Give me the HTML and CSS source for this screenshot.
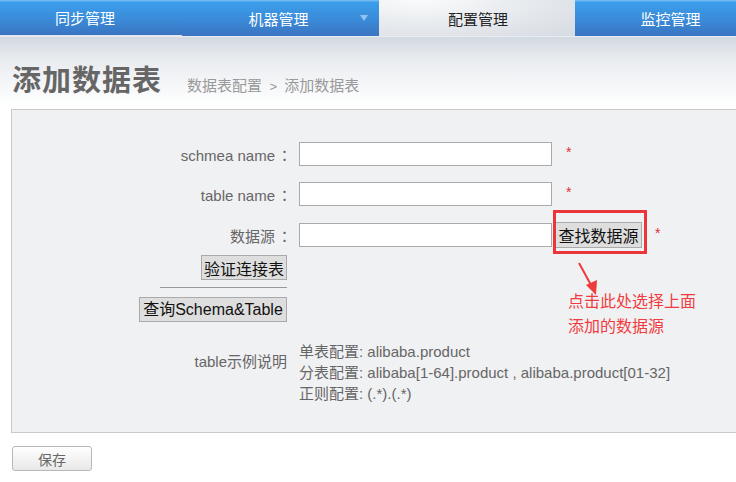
FILE: index.html
```html
<!DOCTYPE html>
<html lang="zh">
<head>
<meta charset="utf-8">
<link rel="stylesheet" href="styles.css">
</head>
<body>
<nav class="nav">
  <div class="tab tab-first">同步管理</div>
  <div class="tab tab-drop">机器管理<span class="caret"></span></div>
  <div class="tab tab-active">配置管理</div>
  <div class="tab tab-last">监控管理</div>
</nav>
<header class="head">
  <h1 class="title">添加数据表</h1>
  <div class="crumb">数据表配置 <span class="gt">&gt;</span> 添加数据表</div>
</header>
<section class="panel">
  <div class="form">
    <label class="lbl">schmea name<span class="colon">：</span></label>
    <div class="field"><input class="inp" type="text"><span class="req">*</span></div>

    <label class="lbl">table name<span class="colon">：</span></label>
    <div class="field"><input class="inp" type="text"><span class="req">*</span></div>

    <label class="lbl">数据源<span class="colon">：</span></label>
    <div class="field field-src"><input class="inp" type="text"><button class="btn btn-find">查找数据源</button><span class="req req2">*</span></div>

    <div class="lbl-col">
      <button class="btn btn-verify">验证连接表</button>
      <hr class="sep">
      <button class="btn btn-query">查询Schema&amp;Table</button>
    </div>
    <div></div>

    <label class="lbl lbl-desc">table示例说明</label>
    <div class="desc">
      <div>单表配置: alibaba.product</div>
      <div>分表配置: alibaba[1-64].product , alibaba.product[01-32]</div>
      <div>正则配置: (.*).(.*)</div>
    </div>
  </div>

  <div class="mark"></div>
  <svg class="arrow" width="30" height="40" viewBox="0 0 30 40">
    <line x1="3" y1="2" x2="15" y2="24" stroke="#ee3b3b" stroke-width="2"/>
    <polygon points="10,24 21,19 20,34" fill="#ee3b3b"/>
  </svg>
  <div class="note">点击此处选择上面<br>添加的数据源</div>
</section>
<div class="actions">
  <button class="save">保存</button>
</div>
</body>
</html>
```
FILE: styles.css
```css
html, body {
  margin: 0;
  padding: 0;
}
body {
  width: 736px;
  height: 482px;
  overflow: hidden;
  background: linear-gradient(to bottom, #ffffff 0, #ffffff 36px, #d3d9e1 37px, #e9ecf0 60px, #ffffff 105px, #ffffff 100%);
  font-family: "Liberation Sans", "Noto Sans CJK SC", sans-serif;
  color: #666;
}
.nav {
  display: flex;
  height: 36px;
}
.tab {
  position: relative;
  display: flex;
  align-items: center;
  justify-content: center;
  color: #fff;
  font-family: "Noto Sans CJK SC", sans-serif;
  font-size: 15px;
  background: linear-gradient(to bottom, #6db8f2 0, #6db8f2 1px, #3b9feb 2px, #3a8ad8 20px, #3a74c0 100%);
  box-sizing: border-box;
}
.tab-first {
  width: 182px;
  border-bottom: 1px solid #dfe6ef;
  padding-right: 12px;
}
.tab-drop {
  width: 197px;
  padding-right: 4px;
}
.caret {
  position: absolute;
  left: 178px;
  top: 15px;
  width: 0;
  height: 0;
  border-left: 4px solid transparent;
  border-right: 4px solid transparent;
  border-top: 6px solid #93c4f1;
}
.tab-active {
  width: 196px;
  color: #222;
  background: radial-gradient(ellipse at 20% 0%, #fbfbfc 0, #eaedf0 40%, #d6dbe2 100%);
  padding-left: 2px;
}
.tab-last {
  width: 161px;
  padding-left: 30px;
}
.head {
  display: flex;
  align-items: baseline;
  height: 73px;
  box-sizing: border-box;
  padding: 23px 0 0 12px;
}
.title {
  margin: 0;
  font-family: "Noto Sans CJK SC", sans-serif;
  font-size: 29px;
  font-weight: bold;
  color: #666;
  letter-spacing: 1px;
  line-height: 38px;
}
.crumb {
  margin-left: 25px;
  font-family: "Noto Sans CJK SC", sans-serif;
  font-size: 15px;
  color: #999;
  word-spacing: 4px;
}
.gt {
  font-family: "Liberation Sans", sans-serif;
  font-size: 13px;
}
.panel {
  position: relative;
  margin-left: 11px;
  height: 324px;
  box-sizing: border-box;
  border: 1px solid #c9c9c9;
  border-right: none;
  background: #f0f1f3;
  padding-top: 32px;
}
.form {
  display: grid;
  grid-template-columns: 275px 1fr;
  column-gap: 12px;
  row-gap: 16px;
  align-items: center;
}
.lbl {
  text-align: right;
  font-size: 15px;
  color: #666;
}
.colon {
  display: inline-block;
  font-family: "Noto Sans CJK TC", sans-serif;
  margin-left: 2px;
  width: 10px;
}
.lbl-desc {
  align-self: start;
  margin-top: 12px;
}
.field {
  display: flex;
  align-items: center;
  height: 24px;
}
.field-src {
  height: 26px;
}
.inp {
  width: 253px;
  height: 24px;
  box-sizing: border-box;
  border: 1px solid #aaa;
  background: #fff;
  margin: 0;
  padding: 0;
}
.req {
  color: #e03030;
  font-size: 14px;
  margin-left: 14px;
  margin-top: -4px;
}
.req2 {
  margin-left: 13px;
}
.btn {
  font-family: "Noto Sans CJK SC", sans-serif;
  font-size: 16px;
  color: #111;
  background: #dedede;
  border: 1px solid #aaa;
  margin: 0;
  padding: 0 2px;
  height: 26px;
  line-height: 22px;
  white-space: nowrap;
}
.btn-find {
  margin-left: 3px;
  width: 87px;
}
.lbl-col {
  display: flex;
  flex-direction: column;
  align-items: flex-end;
  margin-top: -9px;
}
.btn-verify {
  width: 86px;
  height: 25px;
}
.sep {
  width: 127px;
  margin: 7px 0 9px 0;
  border: none;
  border-top: 1px solid #999;
  height: 0;
  align-self: flex-end;
}
.btn-query {
  width: 148px;
  height: 25px;
  padding: 0;
  font-family: "Liberation Sans", "Noto Sans CJK SC", sans-serif;
}
.desc {
  margin-top: 3px;
  font-size: 15px;
  line-height: 21px;
  color: #666;
}
.mark {
  position: absolute;
  left: 541px;
  top: 100px;
  width: 94px;
  height: 44px;
  box-sizing: border-box;
  border: 3px solid #e8363a;
}
.arrow {
  position: absolute;
  left: 564px;
  top: 151px;
}
.note {
  position: absolute;
  left: 556px;
  top: 178px;
  font-family: "Noto Sans CJK SC", sans-serif;
  font-size: 16px;
  line-height: 25px;
  color: #f03c40;
}
.actions {
  padding: 13px 0 0 12px;
}
.save {
  width: 80px;
  height: 25px;
  border: 1px solid #b8b8b8;
  border-radius: 3px;
  background: linear-gradient(to bottom, #ffffff, #e8e8e8);
  font-family: "Noto Sans CJK SC", sans-serif;
  font-size: 14px;
  color: #666;
  padding: 0;
  line-height: 22px;
}
```
